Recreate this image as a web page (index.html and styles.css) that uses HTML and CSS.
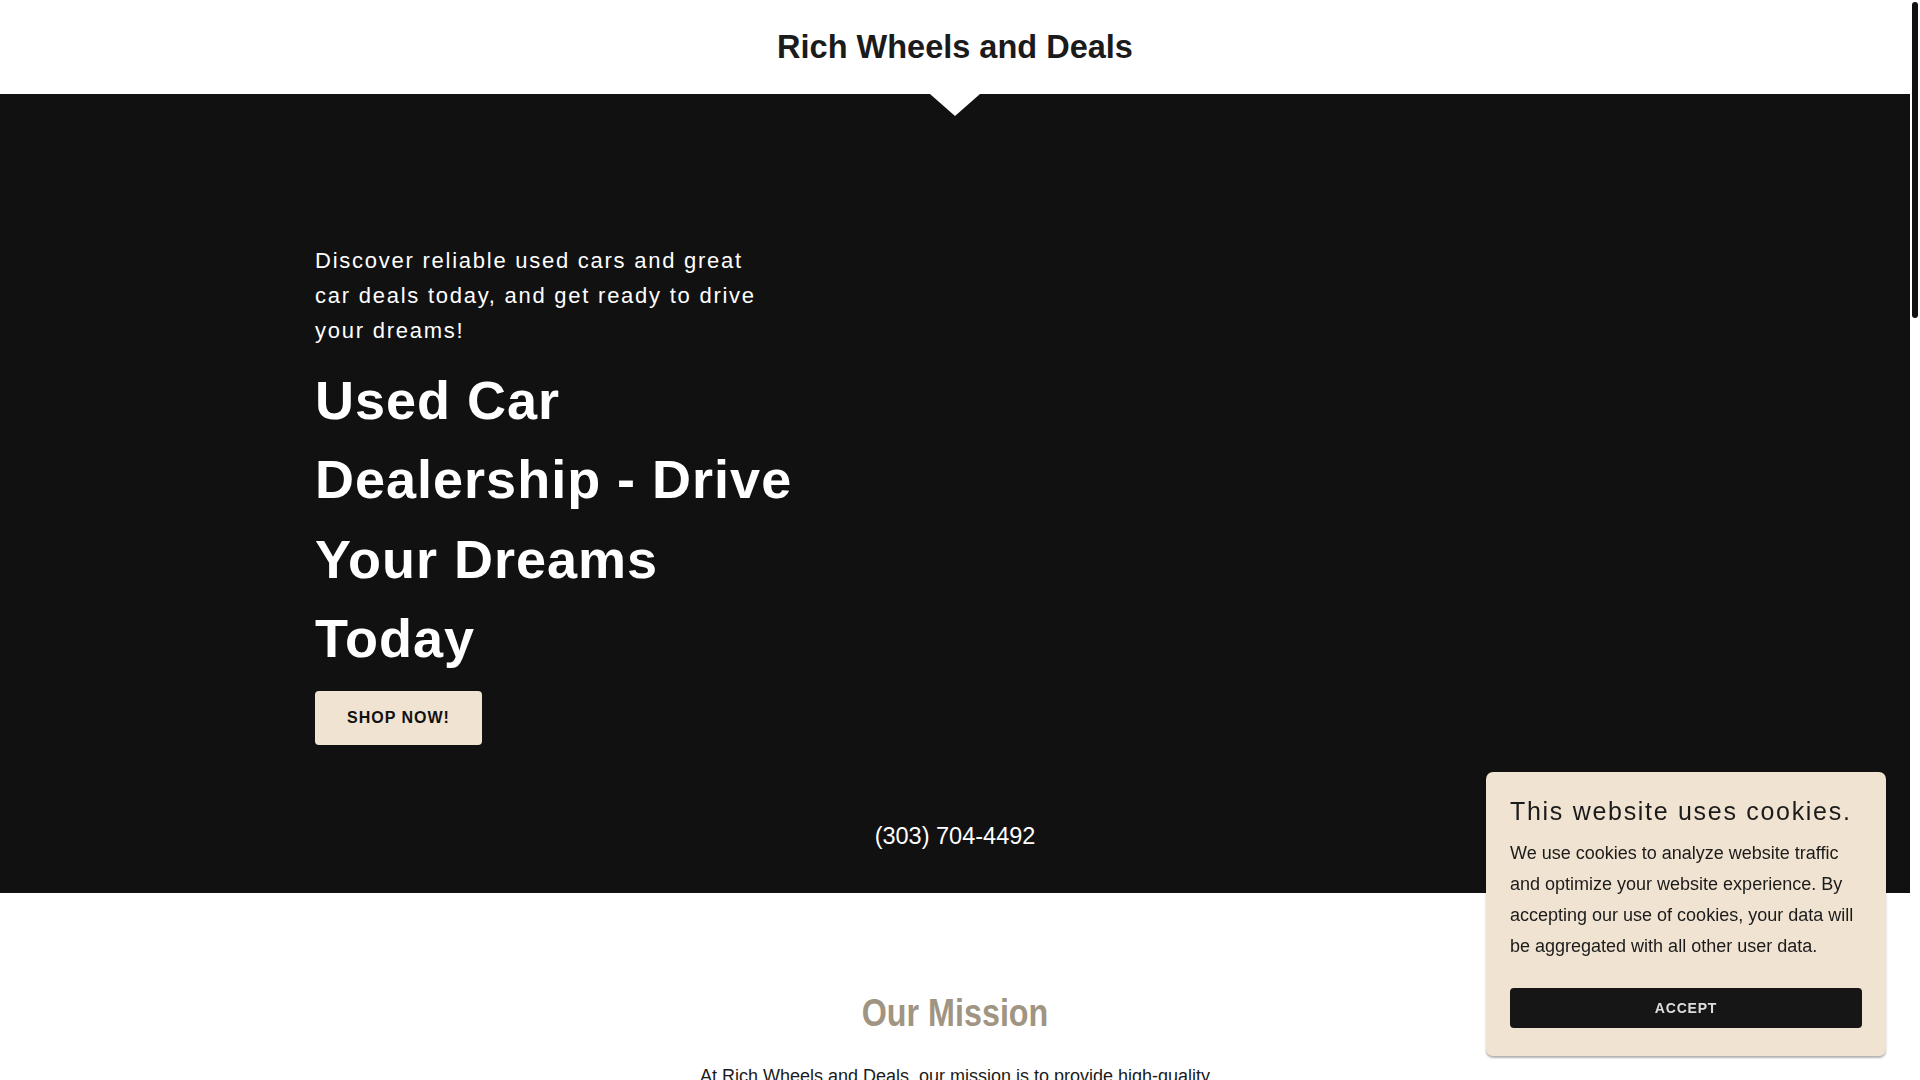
FILE: index.html
```html
<!DOCTYPE html>
<html>
<head>
  <title>Rich Wheels and Deals</title>
  <meta charset="UTF-8">
  <link rel="stylesheet" href="styles.css">
</head>
<body>
  <div class="page">
    <header class="site-header">
      <h1 class="site-title">Rich Wheels and Deals</h1>
    </header>

    <!-- hero -->
    <section class="hero">
      <div class="hero-inner">
        <div class="hero-text">
          <p class="hero-tagline">Discover reliable used cars and great car deals today, and get ready to drive your dreams!</p>
          <h2 class="hero-heading">Used Car Dealership - Drive Your Dreams Today</h2>
          <div class="hero-actions">
            <a href="#" class="btn-shop">Shop Now!</a>
          </div>
        </div>
      </div>
      <p class="hero-phone">(303) 704-4492</p>
    </section>

    <!-- mission -->
    <section class="mission">
      <h2 class="section-title">Our Mission</h2>
      <p class="mission-text">At Rich Wheels and Deals, our mission is to provide high-quality used cars at affordable prices. We strive to make car buying simple, honest and stress-free, so every customer drives away happy.</p>
    </section>

    <section class="contact">
      <h2 class="section-title">Contact Us</h2>
      <p class="mission-text">Better yet, see us in person! We love our customers, so feel free to visit during normal business hours.</p>
      <p class="contact-line">Rich Wheels and Deals</p>
      <p class="contact-line">(303) 704-4492</p>
      <h3 class="hours-title">Hours</h3>
      <p class="contact-line">Open today 09:00 am – 05:00 pm</p>
    </section>

    <footer class="site-footer">
      <p>Copyright © 2024 Rich Wheels and Deals - All Rights Reserved.</p>
    </footer>
  </div>

  <!-- scrollbar -->
  <div class="scrollbar">
    <div class="scrollbar-thumb"></div>
  </div>

  <!-- cookie notice -->
  <div class="cookie-banner">
    <h3 class="cookie-title">This website uses cookies.</h3>
    <p class="cookie-text">We use cookies to analyze website traffic and optimize your website experience. By accepting our use of cookies, your data will be aggregated with all other user data.</p>
    <button class="cookie-accept">Accept</button>
  </div>
</body>
</html>
```

FILE: styles.css
```css
body {
  display: flex;
  height: 100vh;
  margin: 0;
  overflow: hidden;
  font-family: "Liberation Sans", Arial, sans-serif;
  color: #1b1b1b;
  background-color: #fff;
}
.page {
  flex: 1;
  min-width: 0;
  overflow: hidden;
}
.scrollbar {
  flex: none;
  width: 6px;
  padding: 2px;
  background-color: #fff;
}
.scrollbar-thumb {
  height: 316px;
  background-color: #111;
  border-radius: 3px;
}
.site-header {
  height: 94px;
  display: flex;
  align-items: center;
  justify-content: center;
}
.site-title {
  margin: 0;
  font-size: 32.5px;
  font-weight: 700;
  color: #1b1b1b;
}

/* hero */
.hero {
  position: relative;
  background-color: #111;
  color: #fff;
  padding: 149px 0 40px;
}
.hero:before {
  content: "";
  position: absolute;
  top: 0;
  left: 50%;
  margin-left: -25px;
  border-left: 25px solid transparent;
  border-right: 25px solid transparent;
  border-top: 22px solid #fff;
}
.hero-inner {
  max-width: 1280px;
  margin: 0 auto;
}
.hero-text {
  width: 490px;
}
.hero-tagline {
  max-width: 460px;
  margin: 0 0 12px;
  font-size: 22px;
  line-height: 35.2px;
  letter-spacing: 1.75px;
}
.hero-heading {
  margin: 0;
  font-size: 54px;
  line-height: 79.5px;
  letter-spacing: 1px;
  font-weight: 700;
}
.hero-actions {
  display: flex;
  margin-top: 12px;
}
.btn-shop {
  display: flex;
  align-items: center;
  height: 54px;
  padding: 0 32px;
  background-color: #f0e3d1;
  color: #111;
  border-radius: 4px;
  font-size: 16px;
  font-weight: 700;
  letter-spacing: 1px;
  text-transform: uppercase;
  text-decoration: none;
}
.hero-phone {
  margin: 74px 0 0;
  text-align: center;
  font-size: 23.5px;
  line-height: 34.5px;
}

/* mission */
.mission {
  padding: 97px 0 120px;
  text-align: center;
}
.section-title {
  margin: 0 0 23px;
  font-size: 38px;
  line-height: 47.5px;
  font-weight: 700;
  color: #a09482;
  transform: scaleX(0.85);
}
.mission-text {
  max-width: 540px;
  margin: 0 auto;
  font-size: 18px;
  line-height: 30.6px;
}
.contact {
  padding: 100px 0 200px;
  text-align: center;
}
.contact-line {
  margin: 12px 0;
  font-size: 18px;
}
.hours-title {
  margin: 40px 0 10px;
  font-size: 20px;
}
.site-footer {
  padding: 60px 0;
  text-align: center;
  font-size: 15px;
  color: #555;
  background-color: #f7f7f7;
}

/* cookie notice */
.cookie-banner {
  position: fixed;
  right: 34px;
  bottom: 24px;
  width: 352px;
  padding: 24px 24px 28px;
  background-color: #f0e3d1;
  border-radius: 7px;
  box-shadow: 0 2px 2px rgba(0, 0, 0, 0.3);
  z-index: 1000;
}
.cookie-title {
  margin: 0 0 12px;
  font-size: 25px;
  line-height: 30.4px;
  font-weight: 400;
  letter-spacing: 1.7px;
}
.cookie-text {
  margin: 0 0 26px;
  font-size: 18px;
  line-height: 31px;
}
.cookie-accept {
  display: block;
  width: 100%;
  height: 40px;
  border: none;
  border-radius: 4px;
  background-color: #161616;
  color: #ddd;
  font-family: "Liberation Sans", Arial, sans-serif;
  font-size: 14px;
  font-weight: 700;
  letter-spacing: 0.8px;
  text-transform: uppercase;
  cursor: pointer;
}
```
